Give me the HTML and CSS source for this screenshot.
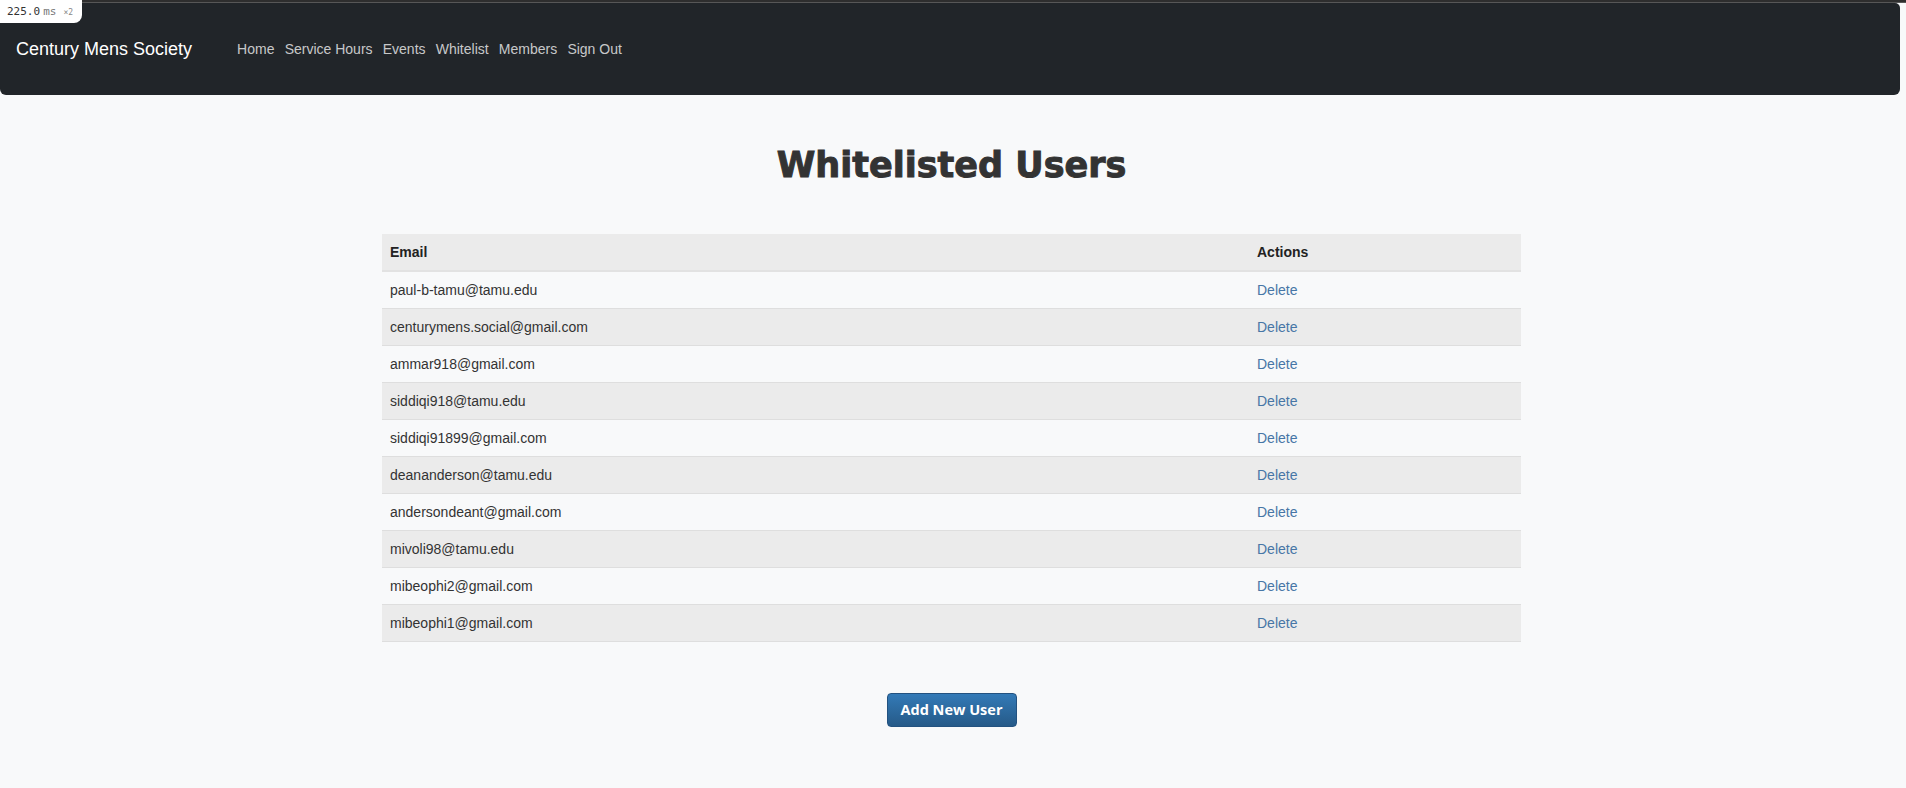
FILE: index.html
```html
<!DOCTYPE html>
<html lang="en">
<head>
<meta charset="utf-8">
<title>Whitelisted Users</title>
<link rel="stylesheet" href="styles.css">
</head>
<body>
<div class="timer"><span class="timer-val">225.0</span><span class="timer-unit">ms</span><span class="timer-x">×2</span></div>
<div class="topstrip"></div>
<nav class="navbar">
  <a class="brand" href="#">Century Mens Society</a>
  <ul class="nav-links">
    <li><a href="#">Home</a></li>
    <li><a href="#">Service Hours</a></li>
    <li><a href="#">Events</a></li>
    <li><a href="#">Whitelist</a></li>
    <li><a href="#">Members</a></li>
    <li><a href="#">Sign Out</a></li>
  </ul>
</nav>
<main class="main">
  <h1 class="title">Whitelisted Users</h1>
  <table class="users">
    <thead>
      <tr><th class="col-email">Email</th><th class="col-actions">Actions</th></tr>
    </thead>
    <tbody>
      <tr><td>paul-b-tamu@tamu.edu</td><td><a class="del" href="#">Delete</a></td></tr>
      <tr><td>centurymens.social@gmail.com</td><td><a class="del" href="#">Delete</a></td></tr>
      <tr><td>ammar918@gmail.com</td><td><a class="del" href="#">Delete</a></td></tr>
      <tr><td>siddiqi918@tamu.edu</td><td><a class="del" href="#">Delete</a></td></tr>
      <tr><td>siddiqi91899@gmail.com</td><td><a class="del" href="#">Delete</a></td></tr>
      <tr><td>deananderson@tamu.edu</td><td><a class="del" href="#">Delete</a></td></tr>
      <tr><td>andersondeant@gmail.com</td><td><a class="del" href="#">Delete</a></td></tr>
      <tr><td>mivoli98@tamu.edu</td><td><a class="del" href="#">Delete</a></td></tr>
      <tr><td>mibeophi2@gmail.com</td><td><a class="del" href="#">Delete</a></td></tr>
      <tr><td>mibeophi1@gmail.com</td><td><a class="del" href="#">Delete</a></td></tr>
    </tbody>
  </table>
  <div class="actions">
    <button class="btn-add" type="button">Add New User</button>
  </div>
</main>
</body>
</html>
```
FILE: styles.css
```css
* { box-sizing: border-box; }

html, body {
  margin: 0;
  padding: 0;
}

body {
  background: #f8f9fa;
  font-family: "Liberation Sans", Arial, sans-serif;
  font-size: 14px;
  line-height: 20px;
  color: #333;
  position: relative;
  min-height: 788px;
}

.timer {
  position: absolute;
  left: 0;
  top: 0;
  width: 82px;
  height: 23px;
  background: #fff;
  border-bottom-right-radius: 8px;
  font-family: "DejaVu Sans Mono", monospace;
  font-size: 11px;
  line-height: 23px;
  padding-left: 7px;
  color: #333;
  z-index: 2;
  white-space: nowrap;
}
.timer-unit { color: #777; margin-left: 3px; }
.timer-x { color: #888; font-size: 8px; margin-left: 7px; }

.topstrip {
  height: 3px;
  background: #2e2e2e;
  border-bottom: 1px solid #575757;
}

.navbar {
  height: 92px;
  margin-right: 6px;
  background: #212529;
  border-radius: 0 5px 6px 6px;
  display: flex;
  align-items: center;
  padding-left: 16px;
}

.brand {
  color: #fff;
  font-size: 18px;
  text-decoration: none;
  line-height: 24px;
}

.nav-links {
  list-style: none;
  margin: 0 0 0 45px;
  padding: 0;
  display: flex;
  gap: 10.2px;
}
.nav-links a {
  color: rgba(255, 255, 255, 0.76);
  text-decoration: none;
  font-size: 14px;
}

.main {
  padding-top: 48px;
  padding-right: 3px;
}

.title {
  margin: 0 0 47px;
  text-align: center;
  font-family: "DejaVu Sans", "Liberation Sans", sans-serif;
  font-weight: 700;
  font-size: 35px;
  line-height: 44px;
  color: #333;
  -webkit-text-stroke: 1px #333;
  letter-spacing: 0;
}

.users {
  width: 1139px;
  margin: 0 auto;
  border-collapse: collapse;
}

.users th,
.users td {
  text-align: left;
  padding: 8px;
  line-height: 20px;
  vertical-align: top;
}

.users th {
  font-weight: 700;
  color: #222;
  font-size: 14px;
  background: #ebebeb;
  border-bottom: 2px solid #e2e2e2;
}

.users td {
  border-top: 1px solid #dedede;
  color: #333;
}

.users tbody tr:nth-child(odd) { background: #f8f9fa; }
.users tbody tr:nth-child(even) { background: #ebebeb; }
.users tbody tr:first-child td { border-top: 0; }
.users tbody tr:last-child td { border-bottom: 1px solid #dedede; }

.col-actions { width: 272px; }

.del {
  color: #4776a6;
  text-decoration: none;
}

.actions {
  display: flex;
  justify-content: center;
  margin-top: 51px;
}

.btn-add {
  height: 34px;
  width: 130px;
  padding: 6px 0;
  border: 1px solid #235280;
  border-radius: 4px;
  background: linear-gradient(to bottom, #337ab7 0%, #265a88 100%);
  color: #fff;
  font-family: "Open Sans", "Liberation Sans", sans-serif;
  font-weight: 700;
  font-size: 14.5px;
  line-height: 20px;
  cursor: pointer;
}
```
